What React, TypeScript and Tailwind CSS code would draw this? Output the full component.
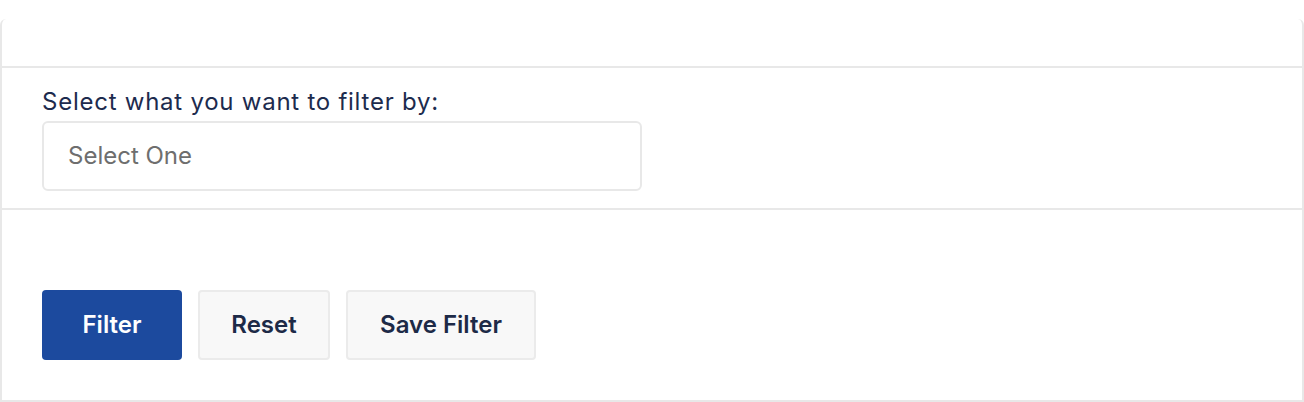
import React from "react";

export default function App() {
  return (
    <div className="w-[1304px] h-[402px] bg-white overflow-hidden" style={{ fontFamily: "Inter, 'Noto Sans', sans-serif" }}>
      <div className="mt-[19px] h-[383px] rounded-t-[6px] border-x-2 border-b-2 border-t-0 border-[#e8e8e8] bg-white flex flex-col">
        <div className="h-[49px] shrink-0 border-b-2 border-[#e8e8e8]" />
        <div className="px-[40px] pt-[19px] pb-[17px] border-b-2 border-[#e8e8e8]">
          <label className="block text-[24px] leading-[30px] tracking-[0.75px] text-[#1d2b4e] mb-[4px]">
            Select what you want to filter by:
          </label>
          <div className="w-[600px] h-[70px] rounded-[6px] border-2 border-[#e8e8e8] bg-white flex items-center px-[24px] text-[24px] text-[#6e6e6e]">
            Select One
          </div>
        </div>
        <div className="flex-1 px-[40px] pt-[80px] flex gap-[16px] items-start">
          <button className="w-[140px] h-[70px] rounded-[4px] bg-[#1c4a9e] text-white text-[24px] font-semibold">
            Filter
          </button>
          <button className="w-[132px] h-[70px] rounded-[4px] border-2 border-[#ebebeb] bg-[#f8f8f8] text-[#1d2a47] text-[24px] font-semibold">
            Reset
          </button>
          <button className="w-[190px] h-[70px] rounded-[4px] border-2 border-[#ebebeb] bg-[#f8f8f8] text-[#1d2a47] text-[24px] font-semibold">
            Save Filter
          </button>
        </div>
      </div>
    </div>
  );
}
